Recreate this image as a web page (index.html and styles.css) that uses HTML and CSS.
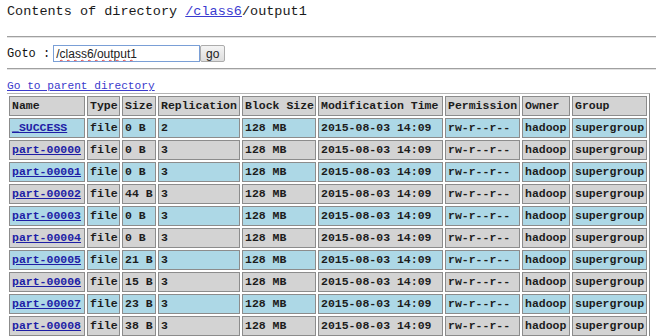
FILE: index.html
```html
<!DOCTYPE html>
<html lang="en">
  <head>
    <meta charset="UTF-8" />
    <title>HDFS:/class6/output1</title>
    <link rel="stylesheet" href="styles.css">
  </head>
  <body>
    <h1 class="title">Contents of directory <a href="#">/class6</a>/output1</h1>
    <hr>

    <form class="goto">
      <label for="dir">Goto :</label>
      <input type="text" id="dir" value="/class6/output1" />
      <button type="button">go</button>
    </form>
    <hr>

    <a class="parent" href="#">Go to parent directory</a>

    <table class="listing">
      <tr class="head">
        <td class="c-name">Name</td>
        <td class="c-type">Type</td>
        <td class="c-size">Size</td>
        <td class="c-repl">Replication</td>
        <td class="c-block">Block Size</td>
        <td class="c-time">Modification Time</td>
        <td class="c-perm">Permission</td>
        <td class="c-owner">Owner</td>
        <td class="c-group">Group</td>
      </tr>
      <tr class="blue">
        <td><a href="#">_SUCCESS</a></td><td>file</td><td>0 B</td><td>2</td><td>128 MB</td>
        <td>2015-08-03 14:09</td><td>rw-r--r--</td><td>hadoop</td><td>supergroup</td>
      </tr>
      <tr class="grey">
        <td><a href="#">part-00000</a></td><td>file</td><td>0 B</td><td>3</td><td>128 MB</td>
        <td>2015-08-03 14:09</td><td>rw-r--r--</td><td>hadoop</td><td>supergroup</td>
      </tr>
      <tr class="blue">
        <td><a href="#">part-00001</a></td><td>file</td><td>0 B</td><td>3</td><td>128 MB</td>
        <td>2015-08-03 14:09</td><td>rw-r--r--</td><td>hadoop</td><td>supergroup</td>
      </tr>
      <tr class="grey">
        <td><a href="#">part-00002</a></td><td>file</td><td>44 B</td><td>3</td><td>128 MB</td>
        <td>2015-08-03 14:09</td><td>rw-r--r--</td><td>hadoop</td><td>supergroup</td>
      </tr>
      <tr class="blue">
        <td><a href="#">part-00003</a></td><td>file</td><td>0 B</td><td>3</td><td>128 MB</td>
        <td>2015-08-03 14:09</td><td>rw-r--r--</td><td>hadoop</td><td>supergroup</td>
      </tr>
      <tr class="grey">
        <td><a href="#">part-00004</a></td><td>file</td><td>0 B</td><td>3</td><td>128 MB</td>
        <td>2015-08-03 14:09</td><td>rw-r--r--</td><td>hadoop</td><td>supergroup</td>
      </tr>
      <tr class="blue">
        <td><a href="#">part-00005</a></td><td>file</td><td>21 B</td><td>3</td><td>128 MB</td>
        <td>2015-08-03 14:09</td><td>rw-r--r--</td><td>hadoop</td><td>supergroup</td>
      </tr>
      <tr class="grey">
        <td><a href="#">part-00006</a></td><td>file</td><td>15 B</td><td>3</td><td>128 MB</td>
        <td>2015-08-03 14:09</td><td>rw-r--r--</td><td>hadoop</td><td>supergroup</td>
      </tr>
      <tr class="blue">
        <td><a href="#">part-00007</a></td><td>file</td><td>23 B</td><td>3</td><td>128 MB</td>
        <td>2015-08-03 14:09</td><td>rw-r--r--</td><td>hadoop</td><td>supergroup</td>
      </tr>
      <tr class="grey">
        <td><a href="#">part-00008</a></td><td>file</td><td>38 B</td><td>3</td><td>128 MB</td>
        <td>2015-08-03 14:09</td><td>rw-r--r--</td><td>hadoop</td><td>supergroup</td>
      </tr>
    </table>
  </body>
</html>
```

FILE: styles.css
```css
body {
  margin: 0 7px;
  font-family: "Liberation Mono", "DejaVu Sans Mono", monospace;
  color: #111;
  background: #fff;
  overflow: hidden;
}

.title {
  margin: 2px 0 0;
  font-size: 13.5px;
  line-height: 20px;
  font-weight: normal;
  color: #1a1a1a;
}

.title a {
  color: #3a3ad0;
}

hr {
  margin: 14px 0 0;
  border: 0;
  border-top: 1px solid #a0a0a0;
  border-bottom: 1px solid #e2e2e2;
  margin-right: -7px;
}

.goto {
  display: flex;
  align-items: center;
  margin: 7px 0 6px;
  height: 17px;
  font-size: 12px;
}

.goto label {
  margin-right: 3px;
}

.goto + hr {
  margin-top: 0;
}

.goto input {
  box-sizing: border-box;
  width: 147px;
  height: 17px;
  margin: 0;
  padding: 0 2px;
  border: 1px solid #7a9fd6;
  font-family: "Liberation Sans", Arial, sans-serif;
  font-size: 12px;
  color: #222;
  text-decoration: underline wavy #e04040;
  text-decoration-thickness: 1px;
  outline: none;
}

.goto button {
  box-sizing: border-box;
  width: 25px;
  height: 17px;
  margin: 0;
  padding: 0;
  border: 1px solid #acacac;
  border-radius: 2px;
  background: linear-gradient(#f4f4f4, #dedede);
  font-family: "Liberation Sans", Arial, sans-serif;
  font-size: 12px;
  color: #222;
}

.parent {
  display: block;
  margin-top: 10px;
  font-size: 11.2px;
  line-height: 13px;
  color: #3a3acc;
}

.listing {
  margin-left: -1px;
  border: 1px solid #b4b4b4;
  border-right-color: #888;
  border-bottom-color: #888;
  border-spacing: 2px;
  font-size: 11.5px;
  font-weight: bold;
  line-height: 14px;
}

.listing td {
  box-sizing: border-box;
  padding: 2px 1px 2px 2px;
  border: 1px solid #8c8c8c;
  white-space: nowrap;
  text-align: left;
  color: #1c1c1c;
}

.listing a {
  color: #1e1ea6;
}

.head td,
.grey td {
  background: #d3d3d3;
}

.blue td {
  background: #add8e6;
}

.head td {
  height: 20px;
}

.c-name { width: 76px; }
.c-type { width: 33px; }
.c-size { width: 34px; }
.c-repl { width: 82px; }
.c-block { width: 74px; }
.c-time { width: 125px; }
.c-perm { width: 75px; }
.c-owner { width: 48px; }
.c-group { width: 75px; }
```
